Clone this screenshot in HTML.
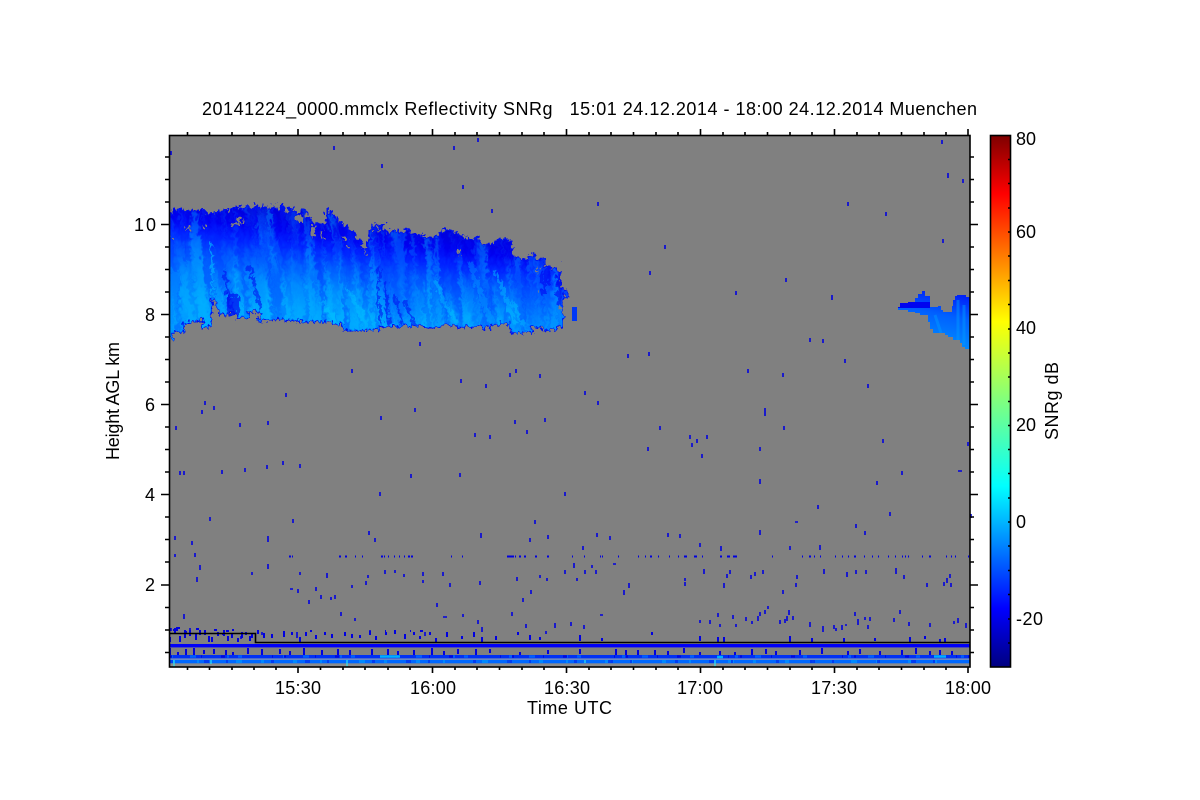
<!DOCTYPE html>
<html><head><meta charset="utf-8"><title>SNRg</title>
<style>html,body{margin:0;padding:0;background:#fff;width:1200px;height:800px;overflow:hidden}svg{display:block}text{font-family:"Liberation Sans",sans-serif;font-size:18px;fill:#000}</style></head>
<body>
<svg width="1200" height="800" viewBox="0 0 1200 800" xmlns="http://www.w3.org/2000/svg">
<defs>
<linearGradient id="cb" x1="0" y1="1" x2="0" y2="0">
<stop offset="0" stop-color="#00007f"/><stop offset=".11" stop-color="#0000ff"/><stop offset=".34" stop-color="#00ffff"/><stop offset=".5" stop-color="#7fff7f"/><stop offset=".65" stop-color="#ffff00"/><stop offset=".89" stop-color="#ff0000"/><stop offset="1" stop-color="#7f0000"/>
</linearGradient>
<linearGradient id="cl" gradientUnits="userSpaceOnUse" x1="312" y1="212" x2="300" y2="315">
<stop offset="0" stop-color="#0000d8"/><stop offset=".2" stop-color="#0000f0"/><stop offset=".33" stop-color="#0020ff"/><stop offset=".5" stop-color="#0058ff"/><stop offset=".72" stop-color="#0088ff"/><stop offset=".95" stop-color="#00a4ff"/><stop offset="1" stop-color="#00a8ff"/>
</linearGradient>
<linearGradient id="cr" gradientUnits="userSpaceOnUse" x1="960" y1="295" x2="950" y2="345">
<stop offset="0" stop-color="#0020f8"/><stop offset=".45" stop-color="#0060ff"/><stop offset="1" stop-color="#0088ff"/>
</linearGradient>
<filter id="streak" x="0" y="0" width="1" height="1" color-interpolation-filters="sRGB">
<feTurbulence type="fractalNoise" baseFrequency="0.13 0.009" numOctaves="3" seed="11"/>
<feColorMatrix type="matrix" values="0 0 0 0 0  0 0 0 0 0.12  0 0 0 0 1  3.6 0 0 0 -1.5"/>
</filter>
<filter id="streakb" x="0" y="0" width="1" height="1" color-interpolation-filters="sRGB">
<feTurbulence type="fractalNoise" baseFrequency="0.11 0.01" numOctaves="3" seed="29"/>
<feColorMatrix type="matrix" values="0 0 0 0 0  0 0 0 0 0.74  0 0 0 0 1  0 3.6 0 0 -1.6"/>
</filter>
<filter id="jag" filterUnits="userSpaceOnUse" x="160" y="195" width="430" height="155" color-interpolation-filters="sRGB">
<feTurbulence type="turbulence" baseFrequency="0.17 0.12" numOctaves="2" seed="5" result="n"/>
<feDisplacementMap in="SourceGraphic" in2="n" scale="9" xChannelSelector="R" yChannelSelector="G"/>
</filter>
<path id="cp" d="M160 340V212H172V209H203V212H216V211H230V208H234V206H238V205H241V209H245V205H250V207H254V204H258V208H262V205H268V209H272V206H276V210H281V205H285V211H290V207H294V212H303V210H308V216H312V222H318V223H326V207H330V212H334V216H338V222H344V226H350V232H356V238H362V247H366V240H369V230H373V224H376V226H380V224H386V232H392V230H400V232H405V228H410V233H425V236H440V231H446V228H452V231H458V233H464V238H480V243H496V238H510V242H513V256H518V258H530V255H537V258H546V266H552V268H561V287H566V290H569V297H565V327H557V330H543V327H533V333H510V325H493V329H483V327H380V330H343V325H333V322H297V320H267V322H260V312H250V318H237V315H220L213 297L212 328H203V321H193V323H185V332H175V340Z"/>
<clipPath id="cc"><use href="#cp"/></clipPath>
<clipPath id="pb"><rect x="170" y="136" width="800" height="531"/></clipPath>
<clipPath id="cq"><path d="M898 310V307H900V303H908V302H915V298H918V294H922V291H925V296H930V307H938V306H941V310H943V312H952V306H953V300H955V296H957V295H966V297H970V349H965V347H962V343H960V340H953V337H948V335H945V333H933V329H930V322H928V315H920V313H915V312H908V310Z"/></clipPath>
</defs>

<rect x="169" y="135" width="801" height="532" fill="#808080"/>

<g clip-path="url(#pb)">
<g transform="translate(-3 -2)">
<g filter="url(#jag)">
<g clip-path="url(#cc)">
<rect x="155" y="195" width="435" height="150" fill="url(#cl)"/>
<rect x="130" y="195" width="470" height="150" transform="skewX(5)" filter="url(#streakb)" opacity=".42"/>
<rect x="130" y="195" width="470" height="150" transform="skewX(5)" filter="url(#streak)" opacity=".36"/>
<g fill="none">
<path d="M172 330C176 310 172 290 176 270M182 322C186 300 188 280 192 262" stroke="#00a0ff" stroke-width="9" opacity=".35"/>
<path d="M211 240C213 262 212 280 214 296" stroke="#00b0ff" stroke-width="2.5" opacity=".7"/>
<path d="M497 272C505 290 508 305 516 324M512 300C516 310 520 318 526 326M436 280C444 300 450 315 458 322M350 290C358 305 362 315 368 326M322 300C330 312 336 320 340 326" stroke="#00c0ff" stroke-width="4" opacity=".5"/>
<path d="M470 262C478 285 486 305 492 322" stroke="#00a8ff" stroke-width="6" opacity=".4"/>
<path d="M381 265C377 285 378 305 383 325M387 280C385 295 387 310 391 325M396 296C398 310 400 318 406 326M404 300C408 310 412 318 418 327M225 270C230 285 226 300 236 316M250 265C254 280 256 290 262 310" stroke="#0010f0" stroke-width="3" opacity=".6"/>
<path d="M228 296h12v20h-14z" fill="#0010f0" opacity=".7"/>
<path d="M545 270v25M548 262v22M560 275v30" stroke="#0000f0" stroke-width="4" opacity=".55"/>
</g>
<use href="#cp" fill="none" stroke="#0010f0" stroke-width="2.5"/>
<g fill="#808080">
<rect x="238" y="219" width="8" height="3"/><rect x="232" y="222" width="10" height="3"/><rect x="205" y="226" width="3" height="2"/><rect x="186" y="228" width="5" height="2"/><rect x="172" y="236" width="2" height="3"/>
<rect x="298" y="216" width="6" height="5"/><rect x="313" y="226" width="3" height="10"/><rect x="322" y="232" width="3" height="6"/><rect x="344" y="236" width="4" height="4"/><rect x="347" y="244" width="2" height="4"/><rect x="365" y="250" width="2" height="4"/>
<rect x="378" y="228" width="4" height="3"/><rect x="459" y="250" width="2" height="4"/><rect x="458" y="252" width="1" height="3"/><rect x="538" y="268" width="2" height="4"/><rect x="538" y="290" width="2" height="4"/><rect x="561" y="306" width="2" height="4"/>
</g>
</g>
</g>
</g>
</g>
<rect x="572" y="307" width="5" height="14" fill="#0038f8"/>
<g clip-path="url(#cq)"><rect x="895" y="285" width="76" height="70" fill="url(#cr)"/><path d="M958 300v40M964 305v40M935 315l6 18" stroke="#0098ff" stroke-width="3" opacity=".5"/><path d="M898 305h32" stroke="#0004f0" stroke-width="6"/></g>

<g stroke="#0000e0" stroke-width="1.6" fill="none">
<path d="M171 151v4M334 146v4M382 164v4M454 146v4M478 138v4M463 185v4M492 209v4M598 202v4M665 245v4M650 271v4M848 202v4M886 212v4M942 140v4M948 173v5M963 179v4M943 239v4M832 295v5M736 291v4M786 278v4M628 354v4M649 352v4M420 342v4M352 369v4M748 369v4M783 373v4M868 384v4M810 338v4M823 339v4M845 359v4M765 408v8M461 379v4M486 384v4M540 374v4M510 373v4M516 369v4M205 401v4M214 406v4M202 410v4M176 426v4M286 393v4M240 423v4M268 421v4M490 435v4M475 433v4M527 430v4M515 420v4M545 418v4M598 401v4M585 391v4M415 408v4M381 416v4M660 426v4M690 435v4M697 439v4M707 435v4M692 443v4M702 454v4M648 447v4M784 426v4M760 447v4M968 442v4M883 439v4M180 471v4M184 471v4M222 470v4M245 468v4M267 465v4M283 461v4M300 464v4M460 473v4M411 474v4M380 492v4M565 492v4M760 479v5M877 481v4M902 471v4M958 471h4M971 514v4M818 505v4M795 522h3M856 524v4M865 531v4M890 512v4M210 517v4M293 519v4M175 536v4M268 536v6M369 531v4M375 538v4M481 533v5M535 520v4M530 538v4M548 535v4M583 546v4M597 533v4M610 536v4M668 533v4M680 534v4M760 530v5M700 543v4M721 546v5M790 546v4M820 545v5M192 541v4M175 554v3"/>
<path d="M195 553v4M200 565v5M197 577v5M252 572v3M268 564v5M300 572v3M327 573v5M331 597v3M352 585v3M366 581v4M385 570v4M395 570v3M316 587v4M321 595v4M309 600v4M290 589h3M298 589v4M335 595v4M341 612v4M368 575v3M404 574v3M423 572v4M443 572v4M450 583v4M423 580v3M437 603v4M480 581v4M517 577v4M531 590v4M523 598v4M540 575v3M547 578v3M565 570v4M574 563v5M585 570v4M592 565v3M596 570v4M624 590v5M629 583v5M685 578v3M685 582v4M724 583v5M727 574v4M751 575v4M755 572v4M763 570v4M796 583v4M783 590v4M797 575v4M824 569v5M847 572v5M856 570v4M866 570v4M896 568v6M904 575v4M927 583v4M944 582v4M947 578v5M950 574v4M951 583v4"/>
<path d="M730 570v4M704 569v5M577 578v3M613 564h3M768 606v3M765 610v4M760 612v4M758 616v5M785 619v4M787 616v5M793 616v4M789 610v5M780 620v4M718 613v4M733 615v4M746 617v4M752 621v3M710 620v4M736 624v3M700 620v3M865 617v3M855 612v4M858 619v6M870 617v4M894 618v4M900 610v4M930 623v4M954 621v3M958 618v5M966 623v5M909 622v4M834 625v4M836 628v3M868 625v4M845 625h2M842 625v5M823 626v6M810 622v5M720 624v3M600 615h3M584 625v4M571 622v4M555 623v5M546 631v3M526 624v4M512 612v4M482 627v5M478 620v4M463 614v3M443 617h4M425 632v4M370 630v4M355 618v3M297 632v6M262 632v3M241 636v3M190 628v4M184 614v5M171 628v3"/>
</g>
<g stroke="#0000e0" stroke-width="2" fill="none">
<path d="M289 556.500h2M292 556.500h1M339 556.500h2M345 556.500h2M355 556.500h1M362 556.500h1M381 556.500h2M384 556.500h1M388 556.500h1M394 556.500h1M399 556.500h1M404 556.500h1M408 556.500h2M411 556.500h2M451 556.500h1M462 556.500h1M507 556.500h7M515 556.500h1M519 556.500h2M524 556.500h2M535 556.500h2M547 556.500h2M572 556.500h1M584 556.500h1M600 556.500h1M602 556.500h1M618 556.500h1M638 556.500h1M645 556.500h1M650 556.500h2M658 556.500h1M669 556.500h1M678 556.500h1M684 556.500h3M694 556.500h3M702 556.500h1M720 556.500h2M727 556.500h3M733 556.500h4M772 556.500h1M802 556.500h1M809 556.500h2M814 556.500h1M820 556.500h1M835 556.500h1M842 556.500h1M848 556.500h1M854 556.500h2M864 556.500h1M872 556.500h1M878 556.500h1M888 556.500h1M895 556.500h1M902 556.500h1M905 556.500h1M908 556.500h1M922 556.500h1M929 556.500h2M946 556.500h1M951 556.500h1M955 556.500h1M968 556.500h1"/>
<path d="M173 630h5M186 632h1M226 631h3M222 634h2M232 630h2M310 631h2M385 631h1M410 631h1M420 631h3M176 628h4M196 629h3M214 630h3"/>
<path d="M170 637v5M175 628v6M180 636v6M185 630v8M190 630v6M196 634v6M200 630v5M205 630v5M209 636v6M212 637v5M218 632v4M224 630v6M228 636v5M232 634v4M238 638v4M242 632v6M246 632v3M250 636v5M252 634v4M258 630v4M264 633v5M272 634v4M284 631v6M292 632v3M300 637v5M306 632v4M316 635v4M325 632v3M332 634v4M345 632v4M352 634v4M360 635v3M370 631v4M376 636v4M386 632v3M395 630v4M405 634v5M414 632v3M420 636v3M430 632v3M436 638v4M447 632v5M462 636v3M474 632v5M482 637v5M496 636v4M518 632v3M530 635v5M540 637v3M580 635v6M602 638v3M652 632v3M700 636v5M718 637v5M724 637v5M790 636v6M812 638v4M844 638v4M875 638v3M910 637v5M925 636v3M940 639v3M945 638v4"/>
<path d="M170 648v7M178 652v3M186 649v6M194 648v7M204 650v4M214 649v5M226 650v5M233 652v3M248 648v6M262 649v6M280 649v5M290 651v4M304 648v7M322 650v5M338 649v6M350 650v5M372 649v6M388 649v6M398 651v4M414 650v5M432 648v7M444 651v4M458 649v5M476 649v6M490 649v4M520 652v3M548 650v4M580 649v5M616 649v6M626 650v5M638 650v5M655 650v5M668 651v4M684 648v5M700 652v3M720 651v4M735 652v3M752 649v6M766 649v5M776 651v4M800 650v5M822 648v6M848 651v4M860 649v5M880 651v4M902 650v5M916 648v6M930 651v4M940 650v5M952 651v4"/>
</g>

<rect x="169" y="644" width="801" height="3.4" fill="#0000f8"/>
<rect x="169" y="655" width="801" height="3.4" fill="#0030f4"/>
<rect x="169" y="658.400" width="801" height="1.6" fill="#6888c8"/>
<rect x="169" y="660" width="801" height="3.4" fill="#0068ff"/>
<rect x="169" y="663.400" width="801" height="3.6" fill="#8c8c8c"/>
<g fill="none">
<path d="M170 656.500H970" stroke="#0060ff" stroke-width="2.6" stroke-dasharray="3 17 6 31 2 9 4 41"/>
<path d="M170 656.500H970" stroke="#0008e0" stroke-width="2.6" stroke-dasharray="2 29 1 19 4 47 1 11"/>
<path d="M170 661.500H970" stroke="#0098ff" stroke-width="3" stroke-dasharray="4 23 2 37 6 19 3 29" opacity=".7"/>
<path d="M170 661.500H970" stroke="#0030f0" stroke-width="3" stroke-dasharray="3 31 5 17 2 43" opacity=".8"/>
<path d="M380 656.500h20M717 657h6M934 656.500h12" stroke="#00b0ff" stroke-width="2.5"/>
<path d="M347 660v7M174 660v7M715 660v7M211 660v4M585 660v3" stroke="#30e8f0" stroke-width="1.2"/>
</g>
<path d="M169 633.500H255.500V642.500H970" fill="none" stroke="#000" stroke-width="1.6"/>

<g stroke="#000" stroke-width="1.6" fill="none">
<rect x="169.500" y="135.500" width="800.500" height="531.500"/>
<path d="M169 224.500h-8M169 314.500h-8M169 404.500h-8M169 494.500h-8M169 585h-8M970 224.500h8M970 314.500h8M970 404.500h8M970 494.500h8M970 585h8"/>
<path d="M169 157h-4M169 179.500h-4M169 202h-4M169 247h-4M169 269.500h-4M169 292h-4M169 337h-4M169 359.500h-4M169 382h-4M169 427h-4M169 449.500h-4M169 472h-4M169 517h-4M169 539.500h-4M169 562h-4M169 607.500h-4M169 630h-4M169 652.500h-4M970 157h4M970 179.500h4M970 202h4M970 247h4M970 269.500h4M970 292h4M970 337h4M970 359.500h4M970 382h4M970 427h4M970 449.500h4M970 472h4M970 517h4M970 539.500h4M970 562h4M970 607.500h4M970 630h4M970 652.500h4"/>
<path d="M298 667v6M432.500 667v6M566.500 667v6M700.500 667v6M834.500 667v6M968 667v6M298 135v-6M432.500 135v-6M566.500 135v-6M700.500 135v-6M834.500 135v-6M968 135v-6"/>
<path d="M187.500 667v3M209.500 667v3M232 667v3M254 667v3M276 667v3M320.500 667v3M343 667v3M365 667v3M388 667v3M410 667v3M455 667v3M477 667v3M499.500 667v3M522 667v3M544 667v3M589 667v3M611 667v3M633.500 667v3M656 667v3M678 667v3M723 667v3M745 667v3M767.500 667v3M790 667v3M812 667v3M857 667v3M879 667v3M901.500 667v3M924 667v3M946 667v3M187.500 135v-3M209.500 135v-3M232 135v-3M254 135v-3M276 135v-3M320.500 135v-3M343 135v-3M365 135v-3M388 135v-3M410 135v-3M455 135v-3M477 135v-3M499.500 135v-3M522 135v-3M544 135v-3M589 135v-3M611 135v-3M633.500 135v-3M656 135v-3M678 135v-3M723 135v-3M745 135v-3M767.500 135v-3M790 135v-3M812 135v-3M857 135v-3M879 135v-3M901.500 135v-3M924 135v-3M946 135v-3"/>
</g>

<rect x="990.500" y="135.500" width="20" height="531.500" fill="url(#cb)" stroke="#000" stroke-width="1.6"/>
<path d="M1010 159.500h-2M1010 183.500h-2M1010 208h-2M1010 232h-2M1010 256h-2M1010 280.500h-2M1010 304.500h-2M1010 329h-2M1010 353h-2M1010 377h-2M1010 401.500h-2M1010 425.500h-2M1010 449.500h-2M1010 473.500h-2M1010 498h-2M1010 522h-2M1010 546h-2M1010 570.500h-2M1010 594.500h-2M1010 619h-2M1010 643h-2" stroke="#000" stroke-width="1.6" fill="none"/>

<text x="202" y="115" textLength="775" lengthAdjust="spacing" xml:space="preserve">20141224_0000.mmclx Reflectivity SNRg   15:01 24.12.2014 - 18:00 24.12.2014 Muenchen</text>

<text x="134" y="231" textLength="22">10</text>
<text x="145" y="321">8</text>
<text x="145" y="411">6</text>
<text x="145" y="501">4</text>
<text x="145" y="591">2</text>

<text x="275" y="694" textLength="46">15:30</text>
<text x="410" y="694" textLength="46">16:00</text>
<text x="544" y="694" textLength="46">16:30</text>
<text x="677" y="694" textLength="46">17:00</text>
<text x="811" y="694" textLength="46">17:30</text>
<text x="945" y="694" textLength="46">18:00</text>
<text x="527" y="714" textLength="85">Time UTC</text>
<text transform="translate(119,460) rotate(-90)" textLength="118">Height AGL km</text>

<text x="1016" y="145" textLength="20">80</text>
<text x="1016" y="238" textLength="20">60</text>
<text x="1016" y="334" textLength="20">40</text>
<text x="1016" y="431" textLength="20">20</text>
<text x="1016" y="528">0</text>
<text x="1016" y="625" textLength="27">-20</text>
<text transform="translate(1058,440) rotate(-90)" textLength="78">SNRg dB</text>
</svg>
</body></html>
